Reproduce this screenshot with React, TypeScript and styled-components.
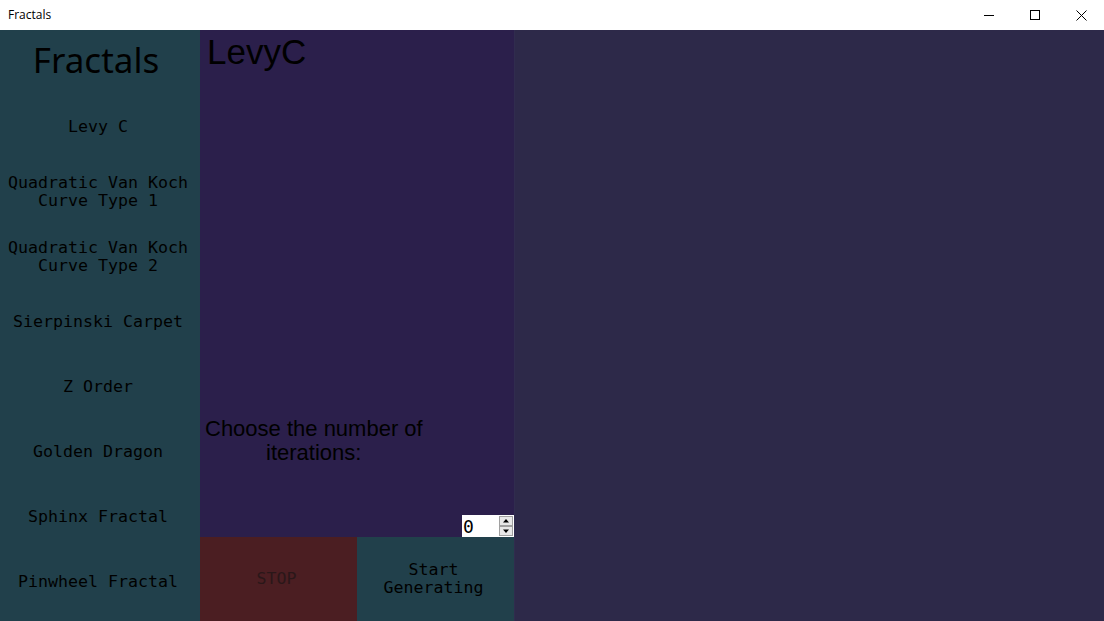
import React from "react";
import styled, { createGlobalStyle } from "styled-components";

const Global = createGlobalStyle`
  html, body { margin: 0; padding: 0; overflow: hidden; }
  body { width: 1104px; height: 621px; background: #2d2949; }
`;

const Window = styled.div`
  width: 1104px;
  height: 621px;
  display: flex;
  flex-direction: column;
  background: #2d2949;
`;

const TitleBar = styled.div`
  height: 30px;
  background: #ffffff;
  display: flex;
  align-items: center;
  justify-content: space-between;
  font-family: "Open Sans", "Noto Sans", sans-serif;
  font-size: 12px;
  color: #000;
`;

const TitleText = styled.span`
  padding-left: 8px;
  padding-bottom: 1px;
`;

const Controls = styled.div`
  display: flex;
  height: 30px;
`;

const CtrlButton = styled.div`
  width: 46px;
  height: 30px;
  display: flex;
  align-items: center;
  justify-content: center;
`;

const Body = styled.div`
  flex: 1;
  display: flex;
  min-height: 0;
`;

const Sidebar = styled.nav`
  width: 200px;
  background: #21404b;
  display: grid;
  grid-template-rows: 64px repeat(8, 65px) 1fr;
`;

const SideHeader = styled.div`
  display: flex;
  align-items: center;
  justify-content: center;
  font-family: "Noto Sans", "Open Sans", sans-serif;
  font-size: 35px;
  color: #000;
  padding-right: 8px;
  padding-bottom: 6px;
`;

const MonoText = styled.div`
  font-family: "DejaVu Sans Mono", "Liberation Mono", monospace;
  font-size: 16.6px;
  letter-spacing: 0;
  line-height: 18px;
  color: #000;
  text-align: center;
`;

const SideItem = styled(MonoText)`
  display: flex;
  align-items: center;
  justify-content: center;
  padding-right: 4px;
`;

const Middle = styled.section`
  width: 314px;
  display: flex;
  flex-direction: column;
  background: #2b1f4b;
`;

const Canvas = styled.div`
  flex: 1;
  display: flex;
  flex-direction: column;
  padding: 2px 0 0 0;
`;

const Heading = styled.h1`
  margin: 0;
  padding-left: 7px;
  font-family: "Liberation Sans", Arial, sans-serif;
  font-weight: 400;
  font-size: 35px;
  line-height: 40px;
  color: #000;
`;

const Spacer = styled.div`
  flex: 1;
`;

const Prompt = styled.div`
  font-family: "Liberation Sans", Arial, sans-serif;
  font-size: 22px;
  line-height: 24px;
  color: #000;
  padding-left: 5px;
  display: flex;
  flex-direction: column;
`;

const PromptLine = styled.span<{ $indent: number }>`
  padding-left: ${(p) => p.$indent}px;
  white-space: nowrap;
`;

const InputRow = styled.div`
  display: flex;
  justify-content: flex-end;
  margin-top: 50px;
`;

const NumberBox = styled.div`
  width: 52px;
  height: 22px;
  background: #ffffff;
  display: flex;
  align-items: center;
  justify-content: space-between;
`;

const NumberValue = styled.span`
  font-family: "DejaVu Sans Mono", "Liberation Mono", monospace;
  font-size: 18px;
  padding-left: 1px;
  color: #000;
`;

const Spinner = styled.div`
  width: 14px;
  height: 20px;
  margin-right: 1px;
  display: flex;
  flex-direction: column;
`;

const SpinButton = styled.div`
  flex: 1;
  border: 1px solid #a0a0a0;
  background: #e8e8e8;
  display: flex;
  align-items: center;
  justify-content: center;
`;

const ButtonRow = styled.div`
  height: 84px;
  display: flex;
`;

const ActionButton = styled(MonoText)<{ $bg: string; $fg: string }>`
  flex: 1;
  background: ${(p) => p.$bg};
  color: ${(p) => p.$fg};
  display: flex;
  align-items: center;
  justify-content: center;
  padding-right: 4px;
`;

const Edge = styled.div`
  width: 1px;
  background: #302c4e;
`;

const Main = styled.main`
  flex: 1;
  background: #2d2949;
`;

const items = [
  ["Levy C"],
  ["Quadratic Van Koch", "Curve Type 1"],
  ["Quadratic Van Koch", "Curve Type 2"],
  ["Sierpinski Carpet"],
  ["Z Order"],
  ["Golden Dragon"],
  ["Sphinx Fractal"],
  ["Pinwheel Fractal"],
];

export default function App() {
  return (
    <>
      <Global />
      <Window>
        <TitleBar>
          <TitleText>Fractals</TitleText>
          <Controls>
            <CtrlButton>
              <svg width="10" height="10" viewBox="0 0 10 10">
                <path d="M0 5.5h10" stroke="#000" strokeWidth="1" />
              </svg>
            </CtrlButton>
            <CtrlButton>
              <svg width="10" height="10" viewBox="0 0 10 10">
                <rect x="0.5" y="0.5" width="9" height="9" fill="none" stroke="#000" strokeWidth="1" />
              </svg>
            </CtrlButton>
            <CtrlButton>
              <svg width="11" height="11" viewBox="0 0 11 11">
                <path d="M0.5 0.5L10.5 10.5M10.5 0.5L0.5 10.5" stroke="#000" strokeWidth="1" />
              </svg>
            </CtrlButton>
          </Controls>
        </TitleBar>
        <Body>
          <Sidebar>
            <SideHeader>Fractals</SideHeader>
            {items.map((lines, i) => (
              <SideItem key={i}>
                <div>
                  {lines.map((l, j) => (
                    <div key={j}>{l}</div>
                  ))}
                </div>
              </SideItem>
            ))}
          </Sidebar>
          <Middle>
            <Canvas>
              <Heading>LevyC</Heading>
              <Spacer />
              <Prompt>
                <PromptLine $indent={0}>Choose the number of</PromptLine>
                <PromptLine $indent={61}>iterations:</PromptLine>
              </Prompt>
              <InputRow>
                <NumberBox>
                  <NumberValue>0</NumberValue>
                  <Spinner>
                    <SpinButton>
                      <svg width="6" height="4" viewBox="0 0 6 4">
                        <path d="M3 0L6 3.5H0Z" fill="#000" />
                      </svg>
                    </SpinButton>
                    <SpinButton>
                      <svg width="6" height="4" viewBox="0 0 6 4">
                        <path d="M0 0.5H6L3 4Z" fill="#000" />
                      </svg>
                    </SpinButton>
                  </Spinner>
                </NumberBox>
              </InputRow>
            </Canvas>
            <ButtonRow>
              <ActionButton $bg="#4b1e22" $fg="#2a1719">STOP</ActionButton>
              <ActionButton $bg="#21404b" $fg="#000">
                <div>
                  <div>Start</div>
                  <div>Generating</div>
                </div>
              </ActionButton>
            </ButtonRow>
          </Middle>
          <Edge />
          <Main />
        </Body>
      </Window>
    </>
  );
}
